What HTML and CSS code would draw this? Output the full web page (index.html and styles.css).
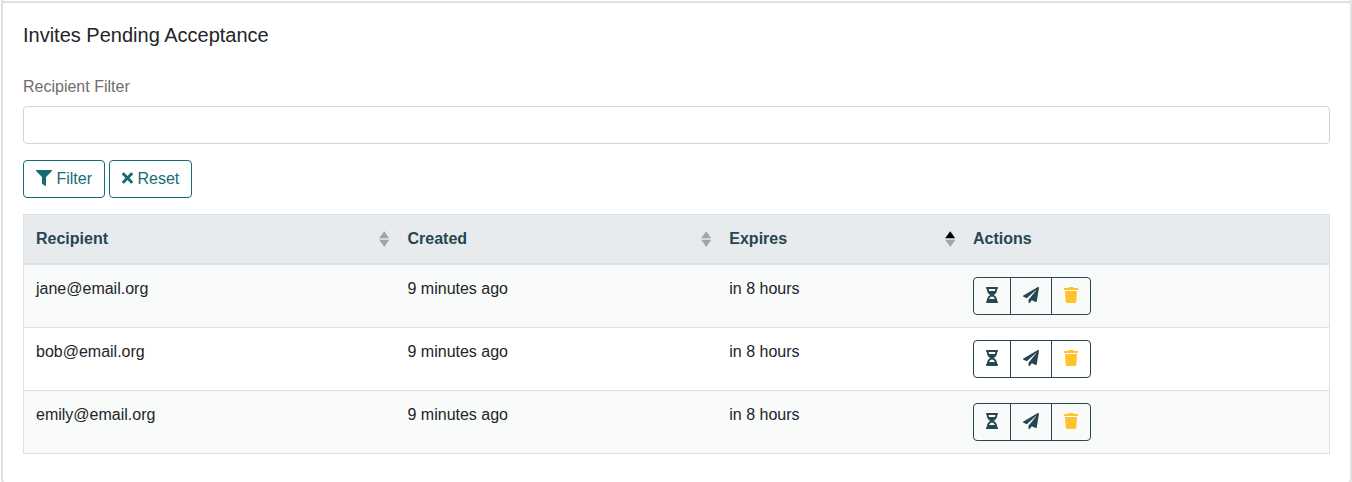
FILE: index.html
```
<!DOCTYPE html>
<html lang="en">
<head>
<meta charset="utf-8">
<title>Invites Pending Acceptance</title>
<link rel="stylesheet" href="styles.css">
</head>
<body>
<svg class="sprite" aria-hidden="true">
  <symbol id="filter" viewBox="0 0 512 512"><path d="M487.976 0H24.028C2.71 0-8.047 25.866 7.058 40.971L192 225.941V432c0 7.831 3.821 15.17 10.237 19.662l80 55.98C298.02 518.69 320 507.493 320 487.98V225.941l184.947-184.97C520.021 25.896 509.338 0 487.976 0z"/></symbol>
  <symbol id="times" viewBox="0 0 352 512"><path d="M242.72 256l100.07-100.07c12.28-12.28 12.28-32.19 0-44.48l-22.24-22.24c-12.28-12.28-32.19-12.28-44.48 0L176 189.28 75.93 89.21c-12.28-12.28-32.19-12.28-44.48 0L9.21 111.45c-12.28 12.28-12.28 32.19 0 44.48L109.28 256 9.21 356.07c-12.28 12.28-12.28 32.19 0 44.48l22.24 22.24c12.28 12.28 32.2 12.28 44.48 0L176 322.72l100.07 100.07c12.28 12.28 32.2 12.28 44.48 0l22.24-22.24c12.28-12.28 12.28-32.19 0-44.48L242.72 256z"/></symbol>
  <symbol id="hourglass" viewBox="0 0 384 512"><path d="M360 0H24C10.745 0 0 10.745 0 24v16c0 13.255 10.745 24 24 24 0 90.965 51.016 167.734 120.842 192C75.016 280.266 24 357.035 24 448c-13.255 0-24 10.745-24 24v16c0 13.255 10.745 24 24 24h336c13.255 0 24-10.745 24-24v-16c0-13.255-10.745-24-24-24 0-90.965-51.016-167.734-120.842-192C308.984 231.734 360 154.965 360 64c13.255 0 24-10.745 24-24V24c0-13.255-10.745-24-24-24zm-75.078 384H99.08c17.059-46.797 52.096-80 92.92-80 40.821 0 75.862 33.196 92.922 80zm.019-256H99.078C91.988 108.548 88 86.748 88 64h208c0 22.805-3.987 44.587-11.059 64z"/></symbol>
  <symbol id="plane" viewBox="0 0 512 512"><path d="M476 3.2L12.5 270.6c-18.1 10.4-15.8 35.6 2.2 43.2L121 358.4l287.3-253.2c5.5-4.9 13.3 2.6 8.6 8.3L176 407v80.5c0 23.6 28.5 32.9 42.5 15.8L282 426l124.6 52.2c14.2 6 30.4-2.9 33-18.2l72-432C515 7.8 493.3-6.8 476 3.2z"/></symbol>
  <symbol id="trash" viewBox="0 0 448 512"><path d="M432 32H312l-9.4-18.7A24 24 0 0 0 281.1 0H166.8a23.72 23.72 0 0 0-21.4 13.3L136 32H16A16 16 0 0 0 0 48v32a16 16 0 0 0 16 16h416a16 16 0 0 0 16-16V48a16 16 0 0 0-16-16zM53.2 467a48 48 0 0 0 47.9 45h245.8a48 48 0 0 0 47.9-45L416 128H32z"/></symbol>
</svg>
<div class="previous"></div>
<main class="card">
  <h1 class="title">Invites Pending Acceptance</h1>
  <label class="label" for="recipient">Recipient Filter</label>
  <input class="input" id="recipient" type="text">
  <div class="buttons">
    <button class="btn"><svg class="icon w16"><use href="#filter"/></svg> Filter</button>
    <button class="btn"><svg class="icon w11"><use href="#times"/></svg> Reset</button>
  </div>
  <table class="table">
    <colgroup><col class="c1"><col class="c2"><col class="c3"><col></colgroup>
    <thead>
      <tr>
        <th><div class="head">Recipient<svg class="sort" viewBox="0 0 101 101" preserveAspectRatio="none"><path class="off" d="M51 1l25 23 24 22H1l25-22z"/><path class="off" d="M51 101l25-23 24-22H1l25 22z"/></svg></div></th>
        <th class="created"><div class="head">Created<svg class="sort" viewBox="0 0 101 101" preserveAspectRatio="none"><path class="off" d="M51 1l25 23 24 22H1l25-22z"/><path class="off" d="M51 101l25-23 24-22H1l25 22z"/></svg></div></th>
        <th class="expires"><div class="head">Expires<svg class="sort" viewBox="0 0 101 101" preserveAspectRatio="none"><path d="M51 1l25 23 24 22H1l25-22z"/><path class="off" d="M51 101l25-23 24-22H1l25 22z"/></svg></div></th>
        <th>Actions</th>
      </tr>
    </thead>
    <tbody>
      <tr>
        <td>jane@email.org</td><td class="created">9 minutes ago</td><td class="expires">in 8 hours</td>
        <td><div class="group"><button class="act"><svg class="icon w12"><use href="#hourglass"/></svg></button><button class="act"><svg class="icon w16"><use href="#plane"/></svg></button><button class="act"><svg class="icon w14 warn"><use href="#trash"/></svg></button></div></td>
      </tr>
      <tr>
        <td>bob@email.org</td><td class="created">9 minutes ago</td><td class="expires">in 8 hours</td>
        <td><div class="group"><button class="act"><svg class="icon w12"><use href="#hourglass"/></svg></button><button class="act"><svg class="icon w16"><use href="#plane"/></svg></button><button class="act"><svg class="icon w14 warn"><use href="#trash"/></svg></button></div></td>
      </tr>
      <tr>
        <td>emily@email.org</td><td class="created">9 minutes ago</td><td class="expires">in 8 hours</td>
        <td><div class="group"><button class="act"><svg class="icon w12"><use href="#hourglass"/></svg></button><button class="act"><svg class="icon w16"><use href="#plane"/></svg></button><button class="act"><svg class="icon w14 warn"><use href="#trash"/></svg></button></div></td>
      </tr>
    </tbody>
  </table>
</main>
</body>
</html>
```
FILE: styles.css
```
*, *::before, *::after { box-sizing: border-box; }
html { overflow: hidden; }
body {
  margin: 0;
  padding: 0 0 0 1px;
  font: 16px/24px "Liberation Sans", Arial, sans-serif;
  color: #212529;
  background: #fff;
}
.sprite { display: none; }
.previous {
  height: 3px;
  margin-bottom: -2px;
  border: 2px solid #dee0e2;
  border-top: 0;
  border-radius: 0 0 4px 4px;
}
.card {
  height: 483px;
  padding: 20px;
  border: 2px solid #dee0e2;
  border-radius: 4px;
}
.title { margin: 0 0 28px; font-size: 20px; line-height: 24px; font-weight: 400; }
.label { display: block; margin-bottom: 7px; color: #6e6e6e; }
.input {
  display: block;
  width: 100%;
  height: 38px;
  padding: 6px 12px;
  border: 1px solid #ced4da;
  border-radius: 4px;
  background: #fff;
  font: inherit;
}
.buttons { display: flex; gap: 4px; margin: 16px 0; }
.btn, .act {
  height: 38px;
  padding: 6px 12px;
  border: 1px solid #146c74;
  border-radius: 4px;
  background: transparent;
  color: #146c74;
  font: inherit;
}
.icon { height: 16px; fill: currentColor; vertical-align: -2px; }
.w11 { width: 11px; }
.w12 { width: 12px; }
.w14 { width: 14px; }
.w16 { width: 16px; }
.table { width: 100%; table-layout: fixed; border-collapse: collapse; border: 1px solid #dee2e6; }
.c1 { width: 371.5px; }
.c2 { width: 322px; }
.c3 { width: 244px; }
th, td { padding: 12px; border-top: 1px solid #dee2e6; text-align: left; vertical-align: top; }
th { background: #e8ebee; border-bottom: 2px solid #dee2e6; color: #264653; font-weight: 700; }
.created { padding-left: 12.5px; }
.expires { padding-left: 12.3px; }
.head { display: flex; justify-content: space-between; align-items: center; margin-right: -6px; }
.sort { width: 10.4px; height: 16px; }
.off { opacity: .3; }
tbody tr:nth-child(odd) { background: #f9fbfa; }
.group { display: flex; }
.act { border-color: #264653; border-radius: 0; color: #264653; }
.act + .act { margin-left: -1px; }
.act:first-child { border-radius: 4px 0 0 4px; }
.act:last-child { border-radius: 0 4px 4px 0; }
.warn { color: #ffc22b; }
```
